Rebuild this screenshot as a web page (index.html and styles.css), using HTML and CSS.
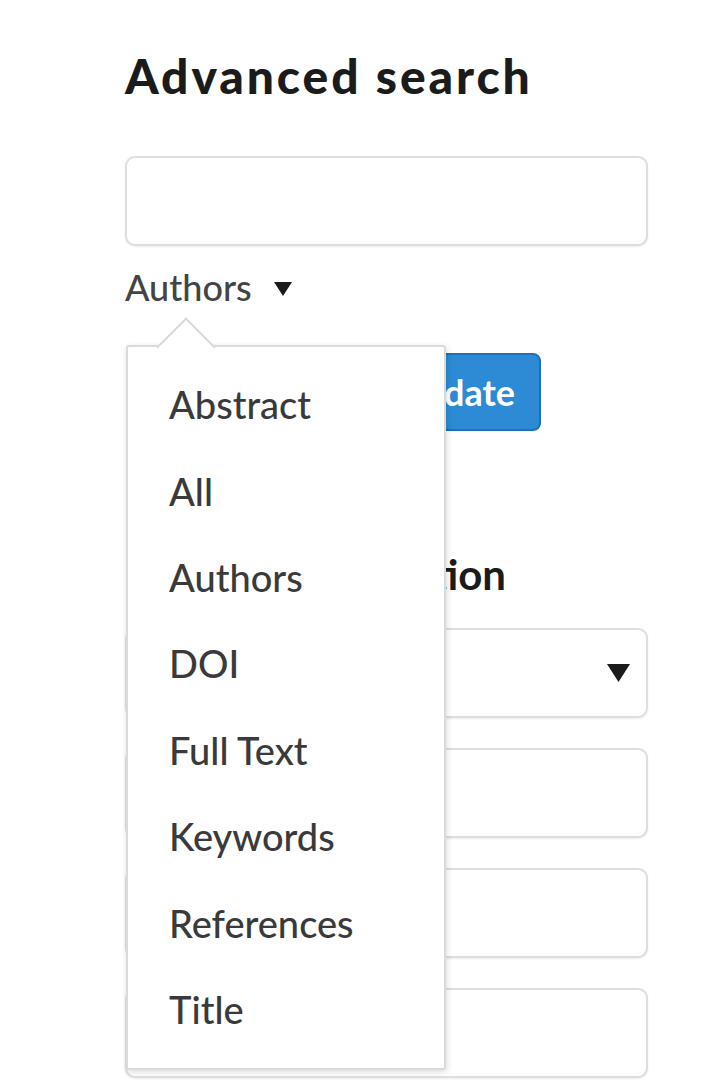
FILE: index.html
```html
<!DOCTYPE html>
<html lang="en">
<head>
<meta charset="utf-8">
<title>Advanced search</title>
<link rel="stylesheet" href="styles.css">
</head>
<body>
<main class="panel">
  <h1 class="title">Advanced search</h1>
  <div class="search-field">
    <input class="text-input" type="text" aria-label="Search term">
    <div class="field-select">
      <button class="field-toggle" type="button">Authors
        <svg class="caret-sm" viewBox="0 0 18 14" width="18" height="14"><polygon points="0,0 18,0 9,14" fill="#1b1b1b"/></svg>
      </button>
      <ul class="field-menu">
        <li class="field-option">Abstract</li>
        <li class="field-option">All</li>
        <li class="field-option">Authors</li>
        <li class="field-option">DOI</li>
        <li class="field-option">Full Text</li>
        <li class="field-option">Keywords</li>
        <li class="field-option">References</li>
        <li class="field-option">Title</li>
      </ul>
    </div>
  </div>
  <div class="actions">
    <button class="btn btn-primary" type="button">Update</button>
  </div>
  <h2 class="section-title">Filter by publication</h2>
  <div class="filters">
    <div class="select-box">
      <svg class="caret-lg" viewBox="0 0 23 18" width="23" height="18"><polygon points="0,0 23,0 11.5,18" fill="#1b1b1b"/></svg>
    </div>
    <input class="text-input" type="text" aria-label="Publication title">
    <input class="text-input" type="text" aria-label="Volume">
    <input class="text-input" type="text" aria-label="Issue">
  </div>
</main>
</body>
</html>
```
FILE: styles.css
```css
* { box-sizing: border-box; }

html, body {
  margin: 0;
  padding: 0;
  background: #ffffff;
  font-family: Lato, "Open Sans", "Liberation Sans", sans-serif;
  color: #222;
}

.panel {
  width: 706px;
  padding: 48px 58px 0 125px;
  overflow: hidden;
  height: 1080px;
}

.title {
  margin: 0;
  font-size: 48px;
  line-height: 56px;
  font-weight: 900;
  color: #1b1b1b;
  letter-spacing: 2.9px;
  white-space: nowrap;
}

.search-field {
  margin-top: 52px;
  display: flex;
  flex-direction: column;
}

.text-input {
  display: block;
  width: 523px;
  height: 90px;
  margin: 0;
  border: 2px solid #dedede;
  border-radius: 10px;
  background: #fff;
  box-shadow: 0 1px 2px rgba(0, 0, 0, 0.08);
  font: inherit;
}

.field-select {
  position: relative;
  margin-top: 20px;
}

.field-toggle {
  display: flex;
  align-items: center;
  gap: 22px;
  padding: 0;
  border: 0;
  background: none;
  font-family: inherit;
  font-size: 36px;
  font-weight: 500;
  line-height: 43px;
  color: #444;
  cursor: pointer;
}

.caret-sm { display: block; margin-top: 2px; }

.field-menu {
  position: absolute;
  left: 1px;
  top: 79px;
  z-index: 5;
  width: 320px;
  margin: 0;
  padding: 14px 0 16px;
  list-style: none;
  background: #fff;
  border: 2px solid #dadada;
  border-radius: 3px;
  box-shadow: 1px 2px 6px rgba(0, 0, 0, 0.14);
}

.field-menu::before {
  content: "";
  position: absolute;
  left: 37px;
  top: -21px;
  width: 40px;
  height: 40px;
  background: #fff;
  border-top: 2px solid #dadada;
  border-left: 2px solid #dadada;
  transform: rotate(45deg);
}

.field-option {
  position: relative;
  height: 86.4px;
  padding-left: 41px;
  display: flex;
  align-items: center;
  font-size: 38px;
  font-weight: 500;
  color: #3a3a3a;
}

.actions {
  margin-top: 44px;
  display: flex;
  justify-content: flex-end;
  padding-right: 107px;
}

.btn {
  height: 78px;
  padding: 0 24px;
  border-radius: 8px;
  font-family: inherit;
  font-size: 36px;
  font-weight: 700;
}

.btn-primary {
  background: #2c8bd4;
  border: 2px solid #1f70b8;
  color: #fff;
}

.section-title {
  margin: 118px 0 0;
  font-size: 42px;
  line-height: 50px;
  font-weight: 700;
  color: #1b1b1b;
  text-align: right;
  padding-right: 142px;
}

.filters {
  margin-top: 29px;
  display: flex;
  flex-direction: column;
  gap: 30px;
}

.select-box {
  width: 523px;
  height: 90px;
  border: 2px solid #dedede;
  border-radius: 10px;
  box-shadow: 0 1px 2px rgba(0, 0, 0, 0.08);
  display: flex;
  align-items: center;
  justify-content: flex-end;
  padding-right: 16px;
}
```
